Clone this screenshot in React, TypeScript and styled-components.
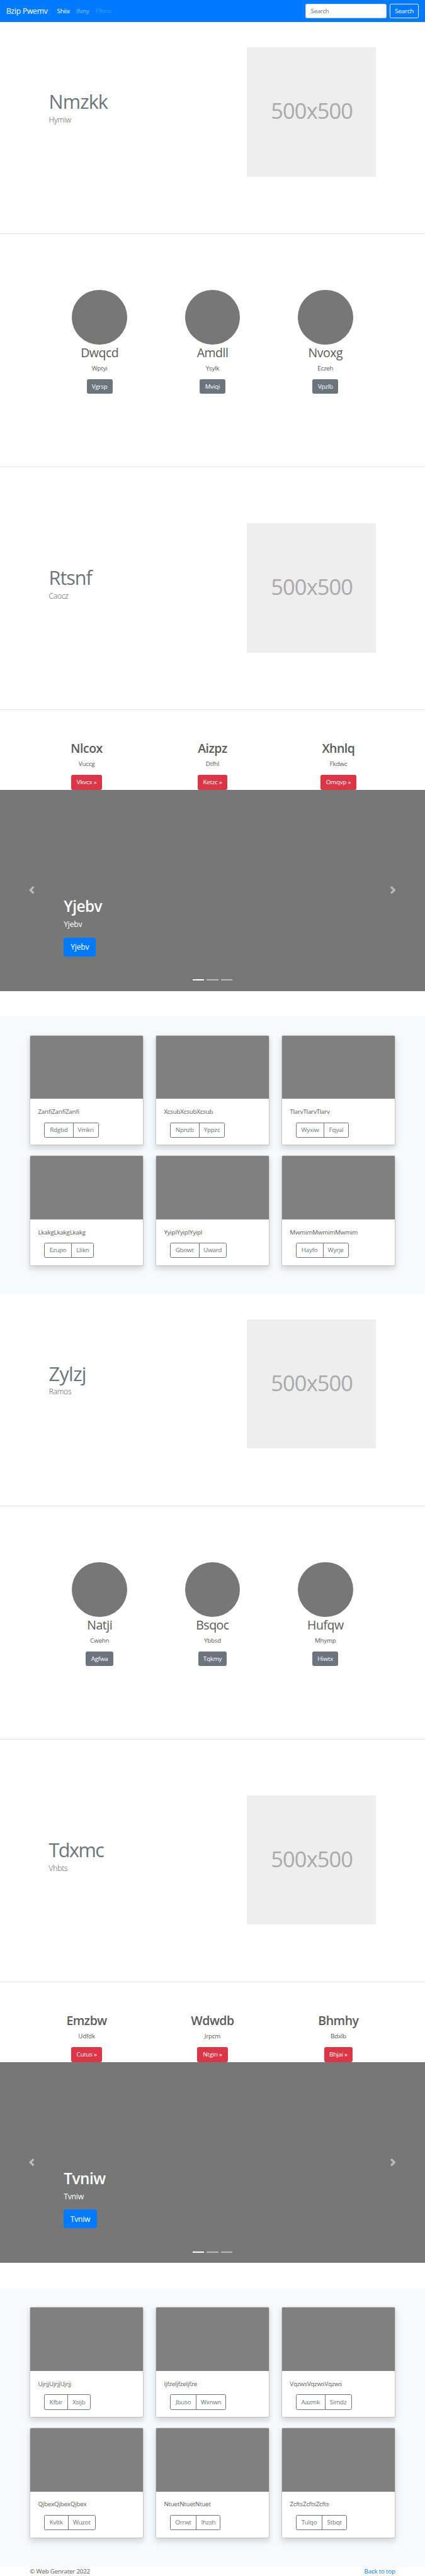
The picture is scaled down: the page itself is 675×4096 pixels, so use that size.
import React from "react";
import styled, { createGlobalStyle } from "styled-components";

const r = (n: number) => `${n / 16}rem`;

const GlobalStyle = createGlobalStyle`
  *, *::before, *::after { box-sizing: border-box; }
  html { font-size: 9.9963px; }
  body {
    margin: 0;
    background: #fff;
    color: #5a5a5a;
    font-family: "Open Sans", "Noto Sans", sans-serif;
    font-size: ${r(15.7)};
    line-height: ${r(24)};
    letter-spacing: -0.022em;
    overflow-x: hidden;
  }
  h1, h2, p { margin: 0; }
`;

const Navbar = styled.header`
  display: flex;
  align-items: center;
  height: ${r(56)};
  padding: 0 ${r(16)};
  background: #007bff;
`;

const Brand = styled.a`
  width: ${r(121)};
  color: #fff;
  font-size: ${r(19.5)};
  letter-spacing: -0.022em;
  white-space: nowrap;
`;

const NavList = styled.nav`
  display: flex;
  gap: ${r(16)};
  flex: 1;
  padding-left: ${r(8)};
`;

const NavItem = styled.a<{ $alpha: number }>`
  color: rgba(255, 255, 255, ${(p) => p.$alpha});
`;

const SearchForm = styled.form`
  display: flex;
  gap: ${r(8)};
`;

const SearchInput = styled.input`
  width: ${r(207)};
  height: ${r(38)};
  padding: 0 ${r(12)};
  border: 1px solid #ced4da;
  border-radius: ${r(4)};
  font: inherit;
  letter-spacing: -0.036em;
  &::placeholder { color: #6c757d; opacity: 1; }
`;

const fills = {
  secondary: "#6c757d",
  danger: "#dc3545",
  primary: "#007bff",
  none: "transparent",
};

const Button = styled.button<{ $fill: keyof typeof fills; $large?: boolean; $width?: number }>`
  display: inline-flex;
  align-items: center;
  justify-content: center;
  width: ${(p) => (p.$width ? r(p.$width) : "auto")};
  height: ${(p) => r(p.$large ? 48 : 38)};
  padding: 0;
  border: 1px solid ${(p) => (p.$fill === "none" ? "#f8f9fa" : fills[p.$fill])};
  border-radius: ${(p) => r(p.$large ? 4.8 : 4)};
  background: ${(p) => fills[p.$fill]};
  color: #fff;
  font: inherit;
  font-size: ${(p) => r(p.$large ? 19.5 : 15.7)};
  letter-spacing: inherit;
  white-space: nowrap;
`;

const Divider = styled.hr`
  height: 1px;
  margin: 0 0 -1px;
  border: 0;
  background: rgba(0, 0, 0, 0.1);
`;

const Container = styled.div<{ $width: number }>`
  width: ${(p) => r(p.$width)};
  margin: 0 auto;
`;

const FeatureSection = styled.section`
  height: ${r(537.4)};
  padding-top: ${r(64)};
`;

const LowerFeatureSection = styled.section`
  height: ${r(618)};
`;

const FeatureRow = styled(Container)`
  display: flex;
  justify-content: space-between;

  ${LowerFeatureSection} & { margin-top: ${r(144.4)}; }
`;

const FeatureTitle = styled.h2<{ $tracking: number }>`
  margin: ${r(114.2)} 0 ${r(6.4)};
  color: #6c757d;
  font-size: ${r(49)};
  line-height: ${r(50)};
  font-weight: 400;
  letter-spacing: ${(p) => p.$tracking}em;
`;

const FeatureLead = styled.p`
  font-size: ${r(19.5)};
  line-height: ${r(30)};
  font-weight: 300;
  letter-spacing: -0.025em;
`;

const Placeholder = styled.div`
  display: flex;
  align-items: center;
  justify-content: center;
  width: ${r(329)};
  height: ${r(329)};
  padding: 0 0 ${r(7)} ${r(2)};
  background: #eee;
  color: #aaa;
  font-size: ${r(55)};
  letter-spacing: -0.025em;
`;

const Profiles = styled.section`
  height: ${r(594)};
`;

const Columns = styled(Container)<{ $top: number }>`
  display: grid;
  grid-template-columns: repeat(3, 1fr);
  padding-top: ${(p) => r(p.$top)};
`;

const Column = styled.div`
  display: flex;
  flex-direction: column;
  align-items: center;
`;

const Avatar = styled.div`
  width: ${r(140)};
  height: ${r(140)};
  border-radius: 50%;
  background: #777;
`;

const ColumnTitle = styled.h2<{ $strong?: boolean }>`
  margin-top: ${r(1.4)};
  font-size: ${r(31.2)};
  line-height: ${r(38)};
  font-weight: ${(p) => (p.$strong ? 600 : 400)};
  letter-spacing: -0.025em;
`;

const ColumnText = styled.p`
  margin: ${r(8.2)} 0 ${r(15.4)};
`;

const Marketing = styled.section`
  height: ${r(204.5)};
`;

const Carousel = styled.section`
  position: relative;
  height: ${r(512)};
  padding: ${r(272.4)} 0 0 15%;
  background: #777;
  color: #fff;
`;

const CarouselTitle = styled.h1`
  font-size: ${r(39)};
  line-height: ${r(48)};
  font-weight: 600;
  letter-spacing: -0.022em;
`;

const CarouselText = styled.p`
  margin: ${r(8)} 0 ${r(17.6)};
  font-size: ${r(19.5)};
  line-height: ${r(30)};
`;

const Arrow = styled.svg<{ $side: "left" | "right" }>`
  position: absolute;
  top: 50%;
  ${(p) => p.$side}: 7.5%;
  width: ${r(20)};
  height: ${r(20)};
  margin: -${r(10)};
  fill: #fff;
  opacity: 0.5;
`;

const Indicators = styled.div`
  position: absolute;
  left: 0;
  right: 0;
  bottom: ${r(26)};
  display: flex;
  justify-content: center;
  gap: ${r(6)};
`;

const Indicator = styled.span<{ $active: boolean }>`
  width: ${r(30)};
  height: ${r(3)};
  background: #fff;
  opacity: ${(p) => (p.$active ? 1 : 0.5)};
`;

const Album = styled.section`
  height: ${r(708)};
  margin-top: ${r(64)};
  padding-top: ${r(48)};
  background: #f8f9fa;
`;

const CardGrid = styled(Container)`
  display: grid;
  grid-template-columns: repeat(3, 1fr);
  gap: ${r(24.4)} ${r(30)};
`;

const Card = styled.article`
  height: ${r(281.6)};
  overflow: hidden;
  border: 1px solid rgba(0, 0, 0, 0.125);
  border-radius: ${r(4)};
  background: #fff;
  background-clip: padding-box;
  box-shadow: 0 ${r(8)} ${r(16)} rgba(0, 0, 0, 0.15);
`;

const CardImage = styled.div`
  height: ${r(161.6)};
  background: #808080;
`;

const CardBody = styled.div`
  padding: ${r(20.6)} ${r(20)} 0;
`;

const ButtonGroup = styled.div`
  display: inline-flex;
  margin: ${r(14.8)} 0 0 ${r(15)};
  border: 1px solid #6c757d;
  border-radius: ${r(4)};
`;

const GroupButton = styled.button<{ $width: number }>`
  width: ${(p) => r(p.$width)};
  height: ${r(35.6)};
  padding: 0;
  border: 0;
  background: transparent;
  color: #6c757d;
  font: inherit;
  letter-spacing: inherit;
  & + & { border-left: 1px solid #6c757d; }
`;

const Footer = styled.footer`
  height: ${r(24)};
  overflow: hidden;
`;

const FooterRow = styled(Container)`
  display: flex;
  justify-content: space-between;
`;

const FooterLink = styled.a`
  color: #007bff;
`;

type Person = [name: string, text: string, action: string, width: number];
type FeatureText = [title: string, lead: string, tracking: number];
type AlbumCard = [text: string, first: string, firstWidth: number, second: string, secondWidth: number];

type Block = {
  intro: FeatureText;
  people: Person[];
  feature: FeatureText;
  offers: Person[];
  slide: string;
  slideButton: number;
  cards: AlbumCard[];
};

const blocks: Block[] = [
  {
    intro: ["Nmzkk", "Hymiw", -0.029],
    people: [
      ["Dwqcd", "Wptyi", "Vgrsp", 66],
      ["Amdll", "Ysylk", "Mviqi", 66],
      ["Nvoxg", "Eczeh", "Vpzlb", 65.5],
    ],
    feature: ["Rtsnf", "Caocz", -0.035],
    offers: [
      ["Nlcox", "Vuccg", "Vkvcx »", 78],
      ["Aizpz", "Dtfhl", "Ketzc »", 76],
      ["Xhnlq", "Fkdwc", "Omqvp »", 90],
    ],
    slide: "Yjebv",
    slideButton: 82,
    cards: [
      ["Zanfi", "Rdgbd", 72, "Vmkri", 64],
      ["Xcsub", "Npnzb", 72, "Yppzc", 65],
      ["Tlarv", "Wyxiw", 70, "Fqyal", 61],
      ["Lkakg", "Ezupo", 68, "Llikn", 56],
      ["Yyipl", "Gbowt", 72, "Uward", 69],
      ["Mwmim", "Hayfo", 67, "Wyrje", 64],
    ],
  },
  {
    intro: ["Zylzj", "Ramos", -0.022],
    people: [
      ["Natji", "Cwehn", "Agfwa", 71],
      ["Bsqoc", "Ybbsd", "Tqkmy", 71.5],
      ["Hufqw", "Mhymp", "Hiwtx", 65.5],
    ],
    feature: ["Tdxmc", "Vhbts", -0.052],
    offers: [
      ["Emzbw", "Udfdk", "Cutus »", 78],
      ["Wdwdb", "Jrpcm", "Ntgin »", 78.5],
      ["Bhmhy", "Bdxlb", "Bhjai »", 72],
    ],
    slide: "Tvniw",
    slideButton: 84,
    cards: [
      ["Ujrjj", "Kfbir", 58, "Xsijb", 57],
      ["Ijfze", "Jbuso", 65, "Wxnwn", 75],
      ["Vqzws", "Aazmk", 72, "Simdz", 67],
      ["Qjbex", "Kvltk", 59, "Wuzot", 69],
      ["Ntuet", "Orrwt", 65, "Ihzsh", 61],
      ["Zcfts", "Tulqo", 65, "Stbqt", 62],
    ],
  },
];

function Feature({ text: [title, lead, tracking] }: { text: FeatureText }) {
  return (
    <FeatureRow $width={832}>
      <div>
        <FeatureTitle $tracking={tracking}>{title}</FeatureTitle>
        <FeatureLead>{lead}</FeatureLead>
      </div>
      <Placeholder>500x500</Placeholder>
    </FeatureRow>
  );
}

function PageBlock({ block }: { block: Block }) {
  return (
    <>
      <FeatureSection>
        <Feature text={block.intro} />
      </FeatureSection>
      <Profiles>
        <Divider />
        <Columns $width={861} $top={144.4}>
          {block.people.map(([name, text, action, width]) => (
            <Column key={name}>
              <Avatar />
              <ColumnTitle>{name}</ColumnTitle>
              <ColumnText>{text}</ColumnText>
              <Button $fill="secondary" $width={width}>{action}</Button>
            </Column>
          ))}
        </Columns>
      </Profiles>
      <LowerFeatureSection>
        <Divider />
        <Feature text={block.feature} />
      </LowerFeatureSection>
      <Marketing>
        <Divider />
        <Columns $width={960} $top={79.5}>
          {block.offers.map(([name, text, action, width]) => (
            <Column key={name}>
              <ColumnTitle $strong>{name}</ColumnTitle>
              <ColumnText>{text}</ColumnText>
              <Button $fill="danger" $width={width}>{action}</Button>
            </Column>
          ))}
        </Columns>
      </Marketing>
      <Carousel>
        <CarouselTitle>{block.slide}</CarouselTitle>
        <CarouselText>{block.slide}</CarouselText>
        <Button $fill="primary" $large $width={block.slideButton}>{block.slide}</Button>
        <Arrow $side="left" viewBox="0 0 8 8">
          <path d="M5.25 0l-4 4 4 4 1.5-1.5L4.25 4l2.5-2.5L5.25 0z" />
        </Arrow>
        <Arrow $side="right" viewBox="0 0 8 8">
          <path d="M2.75 0l-1.5 1.5L3.75 4l-2.5 2.5L2.75 8l4-4-4-4z" />
        </Arrow>
        <Indicators>
          {[0, 1, 2].map((i) => (
            <Indicator key={i} $active={i === 0} />
          ))}
        </Indicators>
      </Carousel>
      <Album>
        <CardGrid $width={930}>
          {block.cards.map(([text, first, firstWidth, second, secondWidth]) => (
            <Card key={text}>
              <CardImage />
              <CardBody>
                <p>{text.repeat(3)}</p>
                <ButtonGroup>
                  <GroupButton $width={firstWidth}>{first}</GroupButton>
                  <GroupButton $width={secondWidth}>{second}</GroupButton>
                </ButtonGroup>
              </CardBody>
            </Card>
          ))}
        </CardGrid>
      </Album>
    </>
  );
}

export default function App() {
  return (
    <>
      <GlobalStyle />
      <Navbar>
        <Brand>Bzip Pwemv</Brand>
        <NavList>
          <NavItem $alpha={1}>Shiix</NavItem>
          <NavItem $alpha={0.5}>Ifvny</NavItem>
          <NavItem $alpha={0.25}>Ffhno</NavItem>
        </NavList>
        <SearchForm>
          <SearchInput placeholder="Search" />
          <Button type="button" $fill="none" $width={73}>Search</Button>
        </SearchForm>
      </Navbar>
      <main>
        {blocks.map((block) => (
          <PageBlock key={block.slide} block={block} />
        ))}
      </main>
      <Footer>
        <FooterRow $width={929}>
          <span>© Web Genrater 2022</span>
          <FooterLink>Back to top</FooterLink>
        </FooterRow>
      </Footer>
    </>
  );
}
